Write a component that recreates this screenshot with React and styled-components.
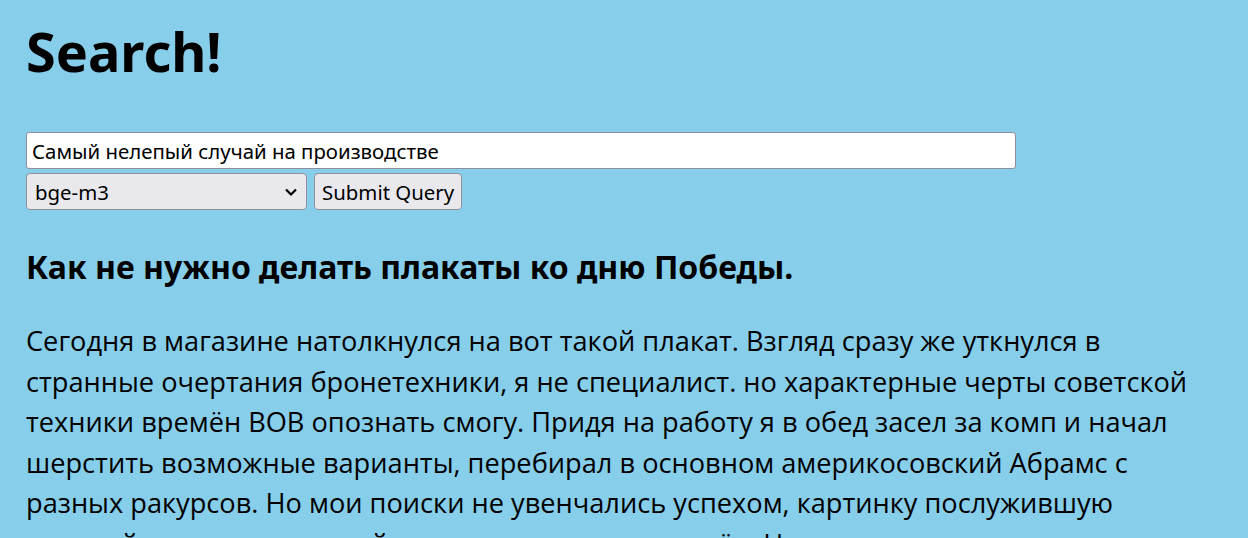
import React from "react";
import styled, { createGlobalStyle } from "styled-components";

const Global = createGlobalStyle`
  html, body { margin: 0; padding: 0; }
  body {
    background: #87ceeb;
    font-family: "Open Sans", "Noto Sans", sans-serif;
    color: #000;
  }
`;

const Page = styled.main`
  padding: 0 26px;
  max-width: 1175px;
`;

const Title = styled.h1`
  font-size: 54px;
  font-weight: 700;
  margin: 14px 0 0;
  line-height: 74px;
  font-family: "Noto Sans", sans-serif;
`;

const Form = styled.form`
  display: flex;
  flex-direction: column;
  align-items: flex-start;
  gap: 4px;
  margin-top: 44px;
`;

const Row = styled.div`
  display: flex;
  gap: 7px;
`;

const TextInput = styled.input`
  box-sizing: border-box;
  width: 990px;
  height: 37px;
  padding: 0 5px;
  font: 20.4px "Noto Sans", sans-serif;
  color: #000;
  background: #fff;
  border: 1px solid #8f8f9d;
  border-radius: 3px;
  outline: none;
`;

const Select = styled.select`
  box-sizing: border-box;
  appearance: none;
  width: 281px;
  height: 37px;
  padding: 0 30px 0 8px;
  font: 20.4px "Noto Sans", sans-serif;
  color: #000;
  background-color: #e9e9ed;
  background-image: url("data:image/svg+xml,%3Csvg xmlns='http://www.w3.org/2000/svg' width='14' height='10' viewBox='0 0 14 10'%3E%3Cpath d='M2 2.5 L7 7.5 L12 2.5' fill='none' stroke='%23000' stroke-width='2.2'/%3E%3C/svg%3E");
  background-repeat: no-repeat;
  background-position: right 8px center;
  border: 1px solid #8f8f9d;
  border-radius: 4px;
`;

const Button = styled.button`
  box-sizing: border-box;
  height: 37px;
  padding: 0 7px;
  font: 20.4px "Noto Sans", sans-serif;
  color: #000;
  background: #e9e9ed;
  border: 1px solid #8f8f9d;
  border-radius: 4px;
`;

const Result = styled.h3`
  font-size: 32px;
  font-weight: 700;
  margin: 35px 0 0;
  line-height: normal;
  font-family: "Noto Sans", sans-serif;
`;

const Text = styled.p`
  font-size: 27.2px;
  line-height: 40.5px;
  margin: 33px 0 0;
  font-family: "Open Sans", "Noto Sans", sans-serif;
`;

export default function App() {
  return (
    <>
      <Global />
      <Page>
        <Title>Search!</Title>
        <Form onSubmit={(e) => e.preventDefault()}>
          <TextInput defaultValue="Самый нелепый случай на производстве" />
          <Row>
            <Select defaultValue="bge-m3">
              <option value="bge-m3">bge-m3</option>
            </Select>
            <Button type="submit">Submit Query</Button>
          </Row>
        </Form>
        <Result>Как не нужно делать плакаты ко дню Победы.</Result>
        <Text>
          Сегодня в магазине натолкнулся на вот такой плакат. Взгляд сразу же уткнулся в странные
          очертания бронетехники, я не специалист. но характерные черты советской техники времён ВОВ
          опознать смогу. Придя на работу я в обед засел за комп и начал шерстить возможные варианты,
          перебирал в основном америкосовский Абрамс с разных ракурсов. Но мои поиски не увенчались
          успехом, картинку послужившую основой для создания этой картинки я так и не нашёл. Но мне
          стало интересно, что же за танк изображён на плакате.
        </Text>
      </Page>
    </>
  );
}
